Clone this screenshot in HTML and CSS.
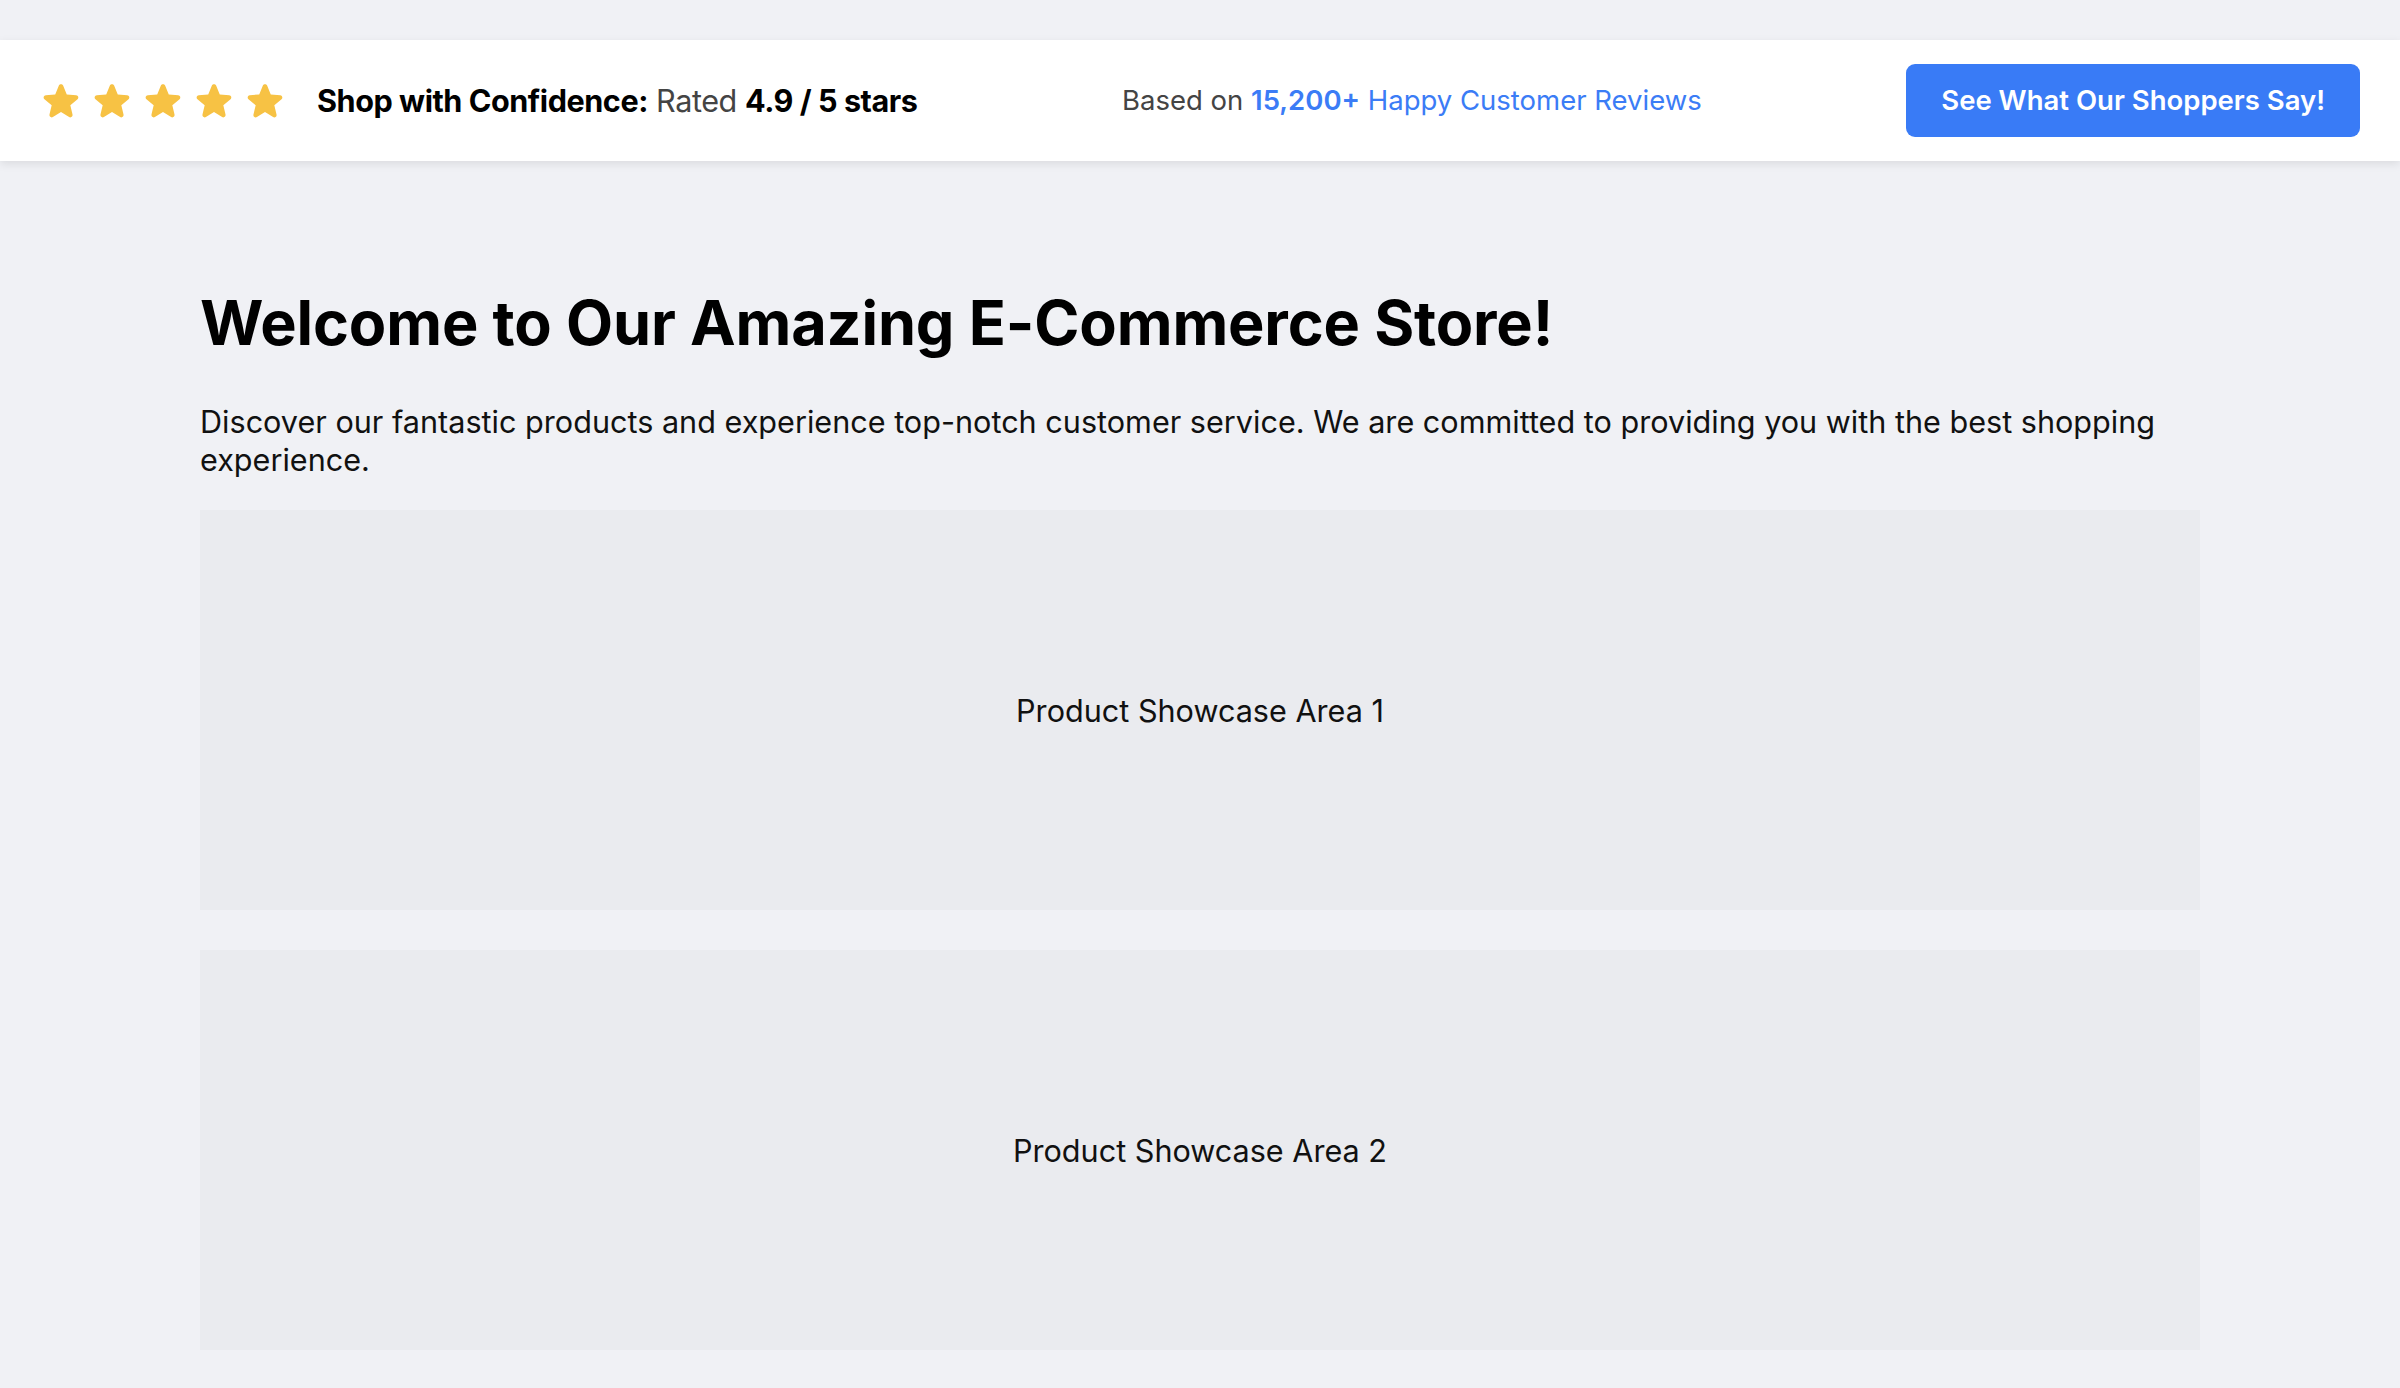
FILE: index.html
```html
<!DOCTYPE html>
<html lang="en">
<head>
<meta charset="utf-8">
<title>Our Amazing E-Commerce Store</title>
<link rel="stylesheet" href="styles.css">
</head>
<body>
<header class="trust-bar">
  <div class="trust-left">
    <div class="stars" aria-label="5 stars">
      <svg class="star" viewBox="0 0 24 24"><path fill-rule="evenodd" d="M10.788 3.21c.448-1.077 1.976-1.077 2.424 0l2.082 5.006 5.404.434c1.164.093 1.636 1.545.749 2.305l-4.117 3.527 1.257 5.273c.271 1.136-.964 2.033-1.96 1.425L12 18.354 7.373 21.18c-.996.608-2.231-.29-1.96-1.425l1.257-5.273-4.117-3.527c-.887-.76-.415-2.212.749-2.305l5.404-.434 2.082-5.005Z"/></svg>
      <svg class="star" viewBox="0 0 24 24"><path fill-rule="evenodd" d="M10.788 3.21c.448-1.077 1.976-1.077 2.424 0l2.082 5.006 5.404.434c1.164.093 1.636 1.545.749 2.305l-4.117 3.527 1.257 5.273c.271 1.136-.964 2.033-1.96 1.425L12 18.354 7.373 21.18c-.996.608-2.231-.29-1.96-1.425l1.257-5.273-4.117-3.527c-.887-.76-.415-2.212.749-2.305l5.404-.434 2.082-5.005Z"/></svg>
      <svg class="star" viewBox="0 0 24 24"><path fill-rule="evenodd" d="M10.788 3.21c.448-1.077 1.976-1.077 2.424 0l2.082 5.006 5.404.434c1.164.093 1.636 1.545.749 2.305l-4.117 3.527 1.257 5.273c.271 1.136-.964 2.033-1.96 1.425L12 18.354 7.373 21.18c-.996.608-2.231-.29-1.96-1.425l1.257-5.273-4.117-3.527c-.887-.76-.415-2.212.749-2.305l5.404-.434 2.082-5.005Z"/></svg>
      <svg class="star" viewBox="0 0 24 24"><path fill-rule="evenodd" d="M10.788 3.21c.448-1.077 1.976-1.077 2.424 0l2.082 5.006 5.404.434c1.164.093 1.636 1.545.749 2.305l-4.117 3.527 1.257 5.273c.271 1.136-.964 2.033-1.96 1.425L12 18.354 7.373 21.18c-.996.608-2.231-.29-1.96-1.425l1.257-5.273-4.117-3.527c-.887-.76-.415-2.212.749-2.305l5.404-.434 2.082-5.005Z"/></svg>
      <svg class="star" viewBox="0 0 24 24"><path fill-rule="evenodd" d="M10.788 3.21c.448-1.077 1.976-1.077 2.424 0l2.082 5.006 5.404.434c1.164.093 1.636 1.545.749 2.305l-4.117 3.527 1.257 5.273c.271 1.136-.964 2.033-1.96 1.425L12 18.354 7.373 21.18c-.996.608-2.231-.29-1.96-1.425l1.257-5.273-4.117-3.527c-.887-.76-.415-2.212.749-2.305l5.404-.434 2.082-5.005Z"/></svg>
    </div>
    <p class="rating-text"><strong>Shop with Confidence:</strong> <span class="muted">Rated</span> <strong>4.9 / 5 stars</strong></p>
  </div>
  <p class="review-count"><span class="muted">Based on</span> <a class="review-link" href="#"><strong>15,200+</strong> Happy Customer Reviews</a></p>
  <a class="cta" href="#">See What Our Shoppers Say!</a>
</header>

<main class="content">
  <h1 class="title">Welcome to Our Amazing E-Commerce Store!</h1>
  <p class="intro">Discover our fantastic products and experience top-notch customer service. We are committed to providing you with the best shopping experience.</p>
  <section class="showcase">Product Showcase Area 1</section>
  <section class="showcase">Product Showcase Area 2</section>
</main>
</body>
</html>
```
FILE: styles.css
```css
* {
  box-sizing: border-box;
}

html, body {
  margin: 0;
  padding: 0;
}

body {
  background: #f0f1f5;
  font-family: Inter, "Noto Sans", "Liberation Sans", sans-serif;
  color: #111;
}

.trust-bar {
  margin-top: 40px;
  background: #ffffff;
  padding: 24px 40px;
  display: flex;
  align-items: center;
  justify-content: space-between;
  box-shadow: 0 3px 9px rgba(0, 0, 0, 0.09);
}

.trust-left {
  display: flex;
  align-items: center;
  gap: 31px;
}

.stars {
  display: flex;
  align-items: center;
  gap: 9px;
}

.star {
  width: 42px;
  height: 42px;
  fill: #f7c244;
  display: block;
}

.rating-text {
  margin: 0;
  font-size: 30.6px;
  line-height: 40px;
  color: #000;
  letter-spacing: -0.45px;
}

.rating-text strong {
  font-weight: 700;
}

.muted {
  color: #444;
  font-weight: 400;
}

.review-count {
  margin: 0;
  font-size: 27.5px;
  line-height: 37px;
}

.review-link {
  color: #3b7cf6;
  text-decoration: none;
}

.review-link strong {
  font-weight: 600;
}

.cta {
  display: block;
  background: #397bf6;
  color: #ffffff;
  font-size: 27.5px;
  font-weight: 600;
  line-height: 37px;
  padding: 18px 35px;
  border-radius: 9px;
  text-decoration: none;
}

.content {
  max-width: 2000px;
  margin: 0 auto;
  padding: 125px 0 40px;
}

.title {
  margin: 0;
  font-size: 61.2px;
  line-height: 74px;
  font-weight: 700;
  color: #000;
  letter-spacing: -0.15px;
}

.intro {
  margin: 43px 0 32px;
  font-size: 30.6px;
  line-height: 37.5px;
  color: #111;
}

.showcase {
  height: 400px;
  margin-bottom: 40px;
  background: #eaebef;
  display: flex;
  align-items: center;
  justify-content: center;
  font-size: 30.6px;
  color: #111;
}
```
